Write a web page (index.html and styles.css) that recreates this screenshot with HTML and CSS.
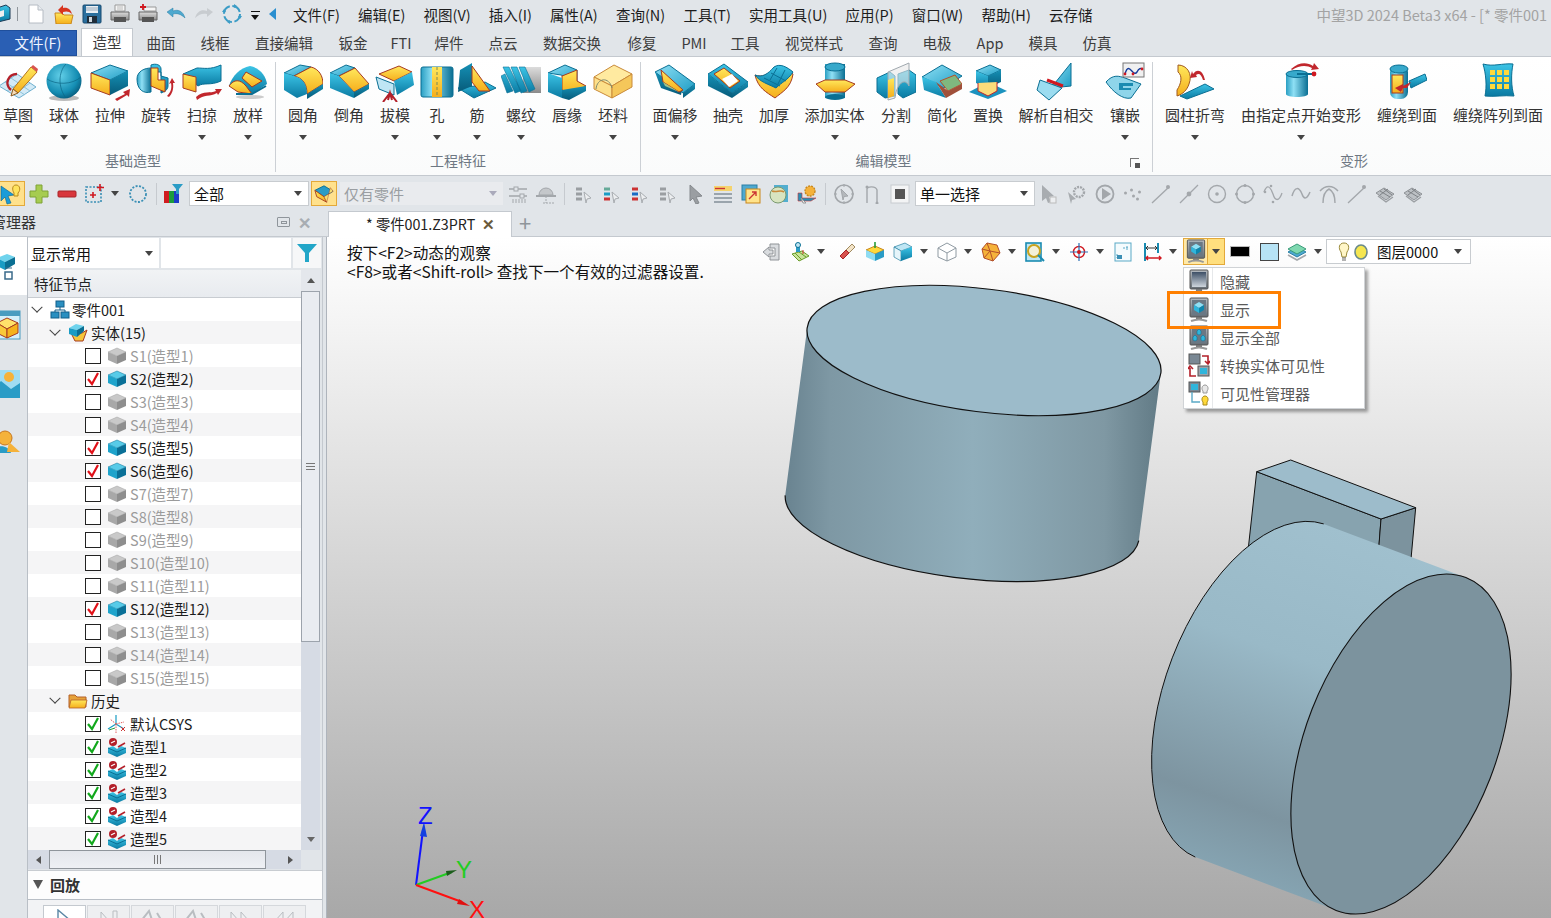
FILE: index.html
```html
<!DOCTYPE html>
<html lang="zh-CN">
<head>
<meta charset="utf-8">
<title>中望3D 2024 Beta3 x64</title>
<link rel="stylesheet" href="styles.css">
</head>
<body>
<svg class="defs" width="0" height="0" aria-hidden="true">
<defs>
<linearGradient id="gb" x1="0" y1="0" x2="0" y2="1"><stop offset="0" stop-color="#3cc4e6"/><stop offset="1" stop-color="#0a7aa2"/></linearGradient>
<linearGradient id="gl" x1="0" y1="0" x2="1" y2="1"><stop offset="0" stop-color="#8fe0f5"/><stop offset="1" stop-color="#1d9cc4"/></linearGradient>
<linearGradient id="gd" x1="0" y1="0" x2="0" y2="1"><stop offset="0" stop-color="#1590b5"/><stop offset="1" stop-color="#075b7a"/></linearGradient>
<linearGradient id="gy" x1="0" y1="0" x2="0" y2="1"><stop offset="0" stop-color="#ffe85c"/><stop offset="1" stop-color="#f5ae1c"/></linearGradient>
<linearGradient id="gs" x1="0" y1="0" x2="0" y2="1"><stop offset="0" stop-color="#dcdcdc"/><stop offset="1" stop-color="#8b8b8b"/></linearGradient>
<radialGradient id="gsph" cx=".4" cy=".35" r=".7"><stop offset="0" stop-color="#62cfe8"/><stop offset=".7" stop-color="#148db3"/><stop offset="1" stop-color="#07597a"/></radialGradient>
<linearGradient id="gcyl" x1="0" y1="0" x2="1" y2="0"><stop offset="0" stop-color="#2a9fc3"/><stop offset=".35" stop-color="#8fe0f5"/><stop offset="1" stop-color="#0a6f93"/></linearGradient>
<linearGradient id="gmon" x1="0" y1="0" x2="0" y2="1"><stop offset="0" stop-color="#b4bac0"/><stop offset="1" stop-color="#656d74"/></linearGradient>
<linearGradient id="gscr" x1="0" y1="0" x2="0" y2="1"><stop offset="0" stop-color="#3d4f66"/><stop offset="1" stop-color="#cfd6dd"/></linearGradient>

<linearGradient id="sideA" gradientUnits="userSpaceOnUse" x1="785" y1="0" x2="1161" y2="0"><stop offset="0" stop-color="#698390"/><stop offset=".12" stop-color="#7e98a4"/><stop offset=".5" stop-color="#90aebb"/><stop offset=".85" stop-color="#7f98a3"/><stop offset="1" stop-color="#617a85"/></linearGradient>
<linearGradient id="sideB" gradientUnits="userSpaceOnUse" x1="1390" y1="545" x2="1270" y2="885"><stop offset="0" stop-color="#a0c0ce"/><stop offset=".38" stop-color="#99b9c7"/><stop offset=".82" stop-color="#7d94a0"/><stop offset="1" stop-color="#85a3b1"/></linearGradient>
<linearGradient id="vpbg" x1="0" y1="0" x2="0" y2="1"><stop offset="0" stop-color="#ffffff"/><stop offset="1" stop-color="#a8a8a8"/></linearGradient>

<!-- ribbon icons -->
<symbol id="r-sketch" viewBox="0 0 40 40"><path d="M1 24 19 12 38 25 21 36Z" fill="#d3eaf6" stroke="#6fb0cf"/><path d="M7 20 27 33M13 16 32 29M9 29 27 17M15 33 32 21" stroke="#8cc3dc" fill="none"/><path d="M19 12C10 12 6 22 13 28" fill="none" stroke="#b3202a" stroke-width="2.4"/><path d="M15 27 33 5 39 10 20 31Z" fill="url(#gy)" stroke="#b5741c"/><path d="M15 27 13 34 20 31Z" fill="#f6dcb8" stroke="#8a5a20"/><path d="M33 5 35 3 40 7 39 10Z" fill="#d9534f"/></symbol>
<symbol id="r-sphere" viewBox="0 0 40 40"><ellipse cx="20" cy="36" rx="15" ry="3" fill="#bbb"/><circle cx="20" cy="19" r="17.5" fill="url(#gsph)"/><path d="M3 17C12 23 28 23 37 15M22 2C14 10 14 26 22 36" fill="none" stroke="#0b6685" stroke-width=".7"/></symbol>
<symbol id="r-extrude" viewBox="0 0 40 40"><path d="M1 11 20 3 38 9 20 18Z" fill="url(#gl)" stroke="#0a6f93"/><path d="M1 11 20 18V33L1 26Z" fill="url(#gy)" stroke="#a63a20"/><path d="M20 18 38 9V24L20 33Z" fill="url(#gd)"/><path d="M25 37 35 32 33 30 40 27 39 35 37 33 27 39Z" fill="#c1272d"/></symbol>
<symbol id="r-revolve" viewBox="0 0 40 40"><path d="M1 17C1 9 9 6 15 6V30C8 32 1 28 1 17Z" fill="url(#gcyl)" stroke="#0a6f93"/><path d="M15 3C20 1 25 3 25 7V14L32 16V24C32 28 28 30 25 31V10H15Z" fill="url(#gb)" stroke="#0a6f93"/><path d="M15 6H22V18H29V30L15 24Z" fill="url(#gy)" stroke="#a63a20"/><path d="M31 34C35 30 36 26 35 21L33 22 36 16 39 21 37 21C38 27 36 32 33 35Z" fill="#c1272d"/></symbol>
<symbol id="r-sweep" viewBox="0 0 40 40"><path d="M1 12 15 6C22 6 28 8 39 3V19C28 24 22 20 16 24Z" fill="url(#gb)" stroke="#0a6f93"/><path d="M1 12 14 15V30L1 26Z" fill="url(#gy)" stroke="#a63a20"/><path d="M14 35C22 28 28 32 34 29L33 27 40 27 36 33 35 31C28 35 22 32 15 38Z" fill="#c1272d"/></symbol>
<symbol id="r-loft" viewBox="0 0 40 40"><path d="M1 24C4 14 12 6 22 4 32 6 38 14 39 22L24 32Z" fill="url(#gb)"/><path d="M1 24C6 17 12 17 18 24L24 32 10 30Z" fill="url(#gy)" stroke="#a63a20"/><path d="M18 10 34 19 24 25 14 16Z" fill="url(#gy)" stroke="#a63a20"/><path d="M8 32 24 32 38 24" fill="none" stroke="#0a6f93" stroke-width="2"/><ellipse cx="22" cy="35" rx="14" ry="2" fill="#ccc"/></symbol>
<symbol id="r-fillet" viewBox="0 0 40 40"><path d="M1 11 17 3 28 5 11 14Z" fill="url(#gl)" stroke="#0a6f93"/><path d="M11 14 28 5C36 7 40 14 40 22L24 32C24 22 20 16 11 14Z" fill="url(#gy)" stroke="#a63a20"/><path d="M1 11 11 14C20 16 24 22 24 32L14 36 1 28Z" fill="url(#gb)"/><path d="M24 32 40 22V27L24 37Z" fill="url(#gd)"/></symbol>
<symbol id="r-chamfer" viewBox="0 0 40 40"><path d="M1 11 17 3 26 6 10 14Z" fill="url(#gl)" stroke="#0a6f93"/><path d="M10 14 26 6 40 22 25 30Z" fill="url(#gy)" stroke="#a63a20"/><path d="M1 11 10 14 25 30V36L1 26Z" fill="url(#gb)"/><path d="M25 30 40 22V27L25 36Z" fill="url(#gd)"/></symbol>
<symbol id="r-draft" viewBox="0 0 40 40"><path d="M4 12 24 4 37 10 19 19Z" fill="url(#gy)" stroke="#a63a20"/><path d="M1 15 19 22V33L4 27Z" fill="#bfe6f4" stroke="#0a6f93"/><path d="M19 19 37 10 39 23 22 33Z" fill="url(#gb)"/><path d="M13 38 15 31 17 38M8 40 15 31 22 40" stroke="#b3202a" stroke-width="2" fill="none"/></symbol>
<symbol id="r-hole" viewBox="0 0 40 40"><rect x="4" y="5" width="32" height="30" rx="2" fill="url(#gcyl)" stroke="#0a6f93"/><rect x="15" y="5" width="10" height="30" fill="url(#gy)"/><path d="M20 5V35" stroke="#7b8a5a" stroke-dasharray="3 2"/></symbol>
<symbol id="r-rib" viewBox="0 0 40 40"><path d="M1 26 17 36 39 26 28 20 18 24Z" fill="url(#gb)" stroke="#0a6f93"/><path d="M3 8 15 1V24L1 30Z" fill="url(#gd)"/><path d="M15 4 33 29 22 29 15 20Z" fill="url(#gy)" stroke="#a63a20"/></symbol>
<symbol id="r-thread" viewBox="0 0 40 40"><rect x="22" y="5" width="18" height="26" fill="url(#gs)"/><path d="M2 5 8 5 20 29 14 31ZM10 5 16 5 26 29 20 31ZM18 5 24 5 34 27 28 30ZM0 14 4 12 12 29 6 31Z" fill="url(#gb)" stroke="#0a6f93" stroke-width=".6"/></symbol>
<symbol id="r-lip" viewBox="0 0 40 40"><path d="M1 11 18 3 30 8V20L14 13Z" fill="url(#gl)" stroke="#0a6f93"/><path d="M15 14 30 8V19L39 24 24 32 15 28Z" fill="url(#gy)" stroke="#a63a20"/><path d="M1 11 15 16V36L1 30Z" fill="url(#gb)"/><path d="M15 28 39 24V29L22 38 15 36Z" fill="url(#gd)"/></symbol>
<symbol id="r-stock" viewBox="0 0 40 40"><path d="M1 15 21 3 39 12 19 24Z" fill="#ffeaa0" stroke="#c98a3a"/><path d="M1 15 19 24V36L1 27Z" fill="#fde08a" stroke="#c98a3a"/><path d="M19 24 39 12V25L19 36Z" fill="#f5c75a" stroke="#c98a3a"/><path d="M3 27C4 16 16 14 19 26" fill="none" stroke="#7f8a70"/></symbol>
<symbol id="r-offset" viewBox="0 0 40 40"><path d="M0 10 14 3 40 22 28 31Z" fill="url(#gl)" stroke="#0a6f93"/><path d="M0 10 6 26 26 33 27 28Z" fill="url(#gd)"/><path d="M6 8 28 28 24 30 8 20Z" fill="url(#gy)" stroke="#a63a20"/><path d="M8 20 24 30 10 24Z" fill="#9cc48a"/><path d="M28 31 40 22V27L28 36Z" fill="url(#gd)"/></symbol>
<symbol id="r-shell" viewBox="0 0 40 40"><path d="M0 12 16 2 40 20 24 31Z" fill="url(#gb)" stroke="#0a6f93"/><path d="M6 12 16 6 32 19 22 26Z" fill="url(#gy)" stroke="#a63a20"/><path d="M14 17 24 12 30 19 21 25Z" fill="#fff"/><path d="M0 12 24 31V36L0 24Z" fill="url(#gd)"/><path d="M24 31 40 20V25L24 36Z" fill="url(#gd)"/></symbol>
<symbol id="r-thicken" viewBox="0 0 40 40"><path d="M1 13C8 16 14 12 20 8 26 3 33 7 39 12 37 26 28 30 21 36 12 30 4 26 1 13Z" fill="url(#gy)" stroke="#a63a20"/><path d="M1 13C8 16 14 12 20 5 26 1 33 5 39 10 34 18 28 20 22 26 14 22 6 20 1 13Z" fill="url(#gb)" stroke="#0a6f93"/><path d="M10 16 26 24M17 11 32 19M23 6 16 18M31 8 24 22" stroke="#0a6f93" fill="none"/></symbol>
<symbol id="r-addsolid" viewBox="0 0 40 40"><rect x="10" y="2" width="20" height="34" fill="url(#gcyl)"/><ellipse cx="20" cy="5" rx="10" ry="4" fill="#37a9cb" stroke="#0a6f93"/><ellipse cx="20" cy="35" rx="10" ry="3" fill="#0a6f93"/><path d="M1 22 10 18H30L40 22 30 30H10Z" fill="url(#gy)" stroke="#a63a20"/></symbol>
<symbol id="r-split" viewBox="0 0 40 40"><path d="M1 16 14 10 19 14V34L9 36 1 30Z" fill="url(#gb)" stroke="#0a6f93"/><path d="M22 12 33 8 40 13V30L27 36 22 32Z" fill="url(#gb)" stroke="#0a6f93"/><path d="M12 10 33 1V24C28 14 20 24 19 36L12 38Z" fill="#e8e8e8" fill-opacity=".6" stroke="#a0a8ae"/><path d="M12 18 18 16V34L12 36Z" fill="url(#gy)"/></symbol>
<symbol id="r-simplify" viewBox="0 0 40 40"><path d="M0 15 20 3 40 14 22 26Z" fill="url(#gl)" stroke="#0a6f93"/><path d="M18 19 33 13 40 22 26 29Z" fill="#7fb87f" stroke="#b3502a"/><path d="M0 15 14 20 24 36 2 28Z" fill="url(#gb)"/><path d="M14 20 26 29 40 22V27L24 36Z" fill="#a0503a"/></symbol>
<symbol id="r-replace" viewBox="0 0 40 40"><path d="M8 9 22 3 33 8 20 14Z" fill="url(#gl)" stroke="#0a6f93"/><path d="M8 9 20 14V26L8 21Z" fill="url(#gb)"/><path d="M20 14 33 8V20L20 26Z" fill="url(#gd)"/><path d="M1 30 20 20 39 29 20 37Z" fill="#1c93bf"/><path d="M10 21V29L20 34 29 29V20" fill="#fbdc7a" stroke="#c1272d"/></symbol>
<symbol id="r-selfint" viewBox="0 0 40 40"><path d="M15 26 35 1V24Z" fill="url(#gl)" stroke="#0a6f93"/><path d="M4 18 26 26 13 38 1 28Z" fill="#9bdcf0" stroke="#0a6f93"/><path d="M11 18 27 24" stroke="#d01820" stroke-width="3"/></symbol>
<symbol id="r-emboss" viewBox="0 0 40 40"><path d="M1 20C8 12 14 14 20 16L36 22 26 36C18 38 8 30 1 20Z" fill="#8fd5ea" stroke="#0a6f93"/><path d="M14 21H28V24H18V26H26V28H14Z" fill="#1a8bb1"/><rect x="18" y="1" width="21" height="14" fill="#f0f0f0" stroke="#777"/><path d="M20 12C24 -2 28 16 32 10 34 6 36 6 37 7" fill="none" stroke="#12389a" stroke-width="1.4"/><circle cx="20" cy="12" r="1.4" fill="#d01820"/><circle cx="28" cy="12" r="1.4" fill="#d01820"/><circle cx="37" cy="7" r="1.4" fill="#d01820"/></symbol>
<symbol id="r-bend" viewBox="0 0 40 40"><path d="M3 3C12 3 18 12 14 22 12 28 8 32 2 34L2 28C6 22 8 14 3 10Z" fill="url(#gy)" stroke="#a05a20"/><path d="M5 34 30 22 39 27 12 37Z" fill="url(#gb)" stroke="#0a6f93"/><path d="M18 12C22 6 28 8 30 18L28 18C26 12 24 11 21 13L22 15 15 16 17 9Z" fill="#c1272d"/></symbol>
<symbol id="r-deform" viewBox="0 0 40 40"><path d="M5 12V32C5 36 27 36 27 32V12Z" fill="url(#gcyl)"/><ellipse cx="16" cy="12" rx="11" ry="3.5" fill="#37a9cb" stroke="#0a6f93"/><path d="M16 12 34 12" stroke="#0a6f93" stroke-width="2"/><circle cx="33" cy="12" r="2.4" fill="#d01820"/><path d="M10 7C18 0 26 0 32 4L33 1 38 7 30 8 31 6C26 3 18 3 11 8Z" fill="#c1272d"/></symbol>
<symbol id="r-wrap" viewBox="0 0 40 40"><rect x="3" y="3" width="18" height="34" rx="7" fill="url(#gcyl)"/><ellipse cx="12" cy="7" rx="9" ry="4" fill="#37a9cb" stroke="#0a6f93"/><rect x="5" y="13" width="11" height="18" fill="url(#gy)" stroke="#a63a20"/><path d="M22 19 38 12 40 18 24 26Z" fill="url(#gb)" stroke="#0a6f93"/><path d="M8 26 16 22V24L24 20 20 26H16L14 30Z" fill="#c1272d"/></symbol>
<symbol id="r-wraparr" viewBox="0 0 40 40"><path d="M5 2C16 5 24 1 35 2 33 12 33 24 36 34 26 33 16 35 7 34 9 24 8 12 5 2Z" fill="url(#gb)" stroke="#0a6f93"/><path d="M12 8h5v5h-5zM19 8h5v5h-5zM26 8h5v5h-5zM12 15h5v5h-5zM19 15h5v5h-5zM26 15h5v5h-5zM12 22h5v5h-5zM19 22h5v5h-5zM26 22h5v5h-5z" fill="#ffd93a"/></symbol>

<!-- quick access -->
<symbol id="q-app" viewBox="0 0 20 20"><path d="M0 5 12 1 16 4V15L4 18Z" fill="url(#gb)" stroke="#1c3a55"/><path d="M4 8 10 6V12L4 14Z" fill="#f0f0f0"/></symbol>
<symbol id="q-new" viewBox="0 0 20 20"><path d="M3 1H12L17 6V19H3Z" fill="#fff" stroke="#b6bcc4"/><path d="M12 1V6H17" fill="#e8ecf0" stroke="#b6bcc4"/></symbol>
<symbol id="q-open" viewBox="0 0 20 20"><path d="M1 9H8L10 11H19L17 20H2Z" fill="url(#gy)" stroke="#c9871c"/><path d="M4 6 9 1V4C14 3 17 6 18 10 15 7 12 7 9 8V11Z" fill="#d8341e"/></symbol>
<symbol id="q-save" viewBox="0 0 20 20"><rect x="1" y="1" width="18" height="18" rx="1" fill="#2a6f9e" stroke="#174a70"/><rect x="4" y="2" width="12" height="7" fill="#e9eff4"/><path d="M4 4h12M4 6h12" stroke="#9ab"/><rect x="5" y="12" width="10" height="7" fill="#1f2d3a"/><rect x="7" y="13" width="3" height="5" fill="#cfd8df"/></symbol>
<symbol id="q-print" viewBox="0 0 20 20"><path d="M5 1H15V7H5Z" fill="#f5f5f5" stroke="#999"/><path d="M1 8H19V16H1Z" fill="url(#gs)" stroke="#666"/><rect x="4" y="13" width="12" height="5" fill="#555"/><path d="M7 3h6M7 5h6" stroke="#bbb"/></symbol>
<symbol id="q-print2" viewBox="0 0 20 20"><path d="M6 3H18V7H6Z" fill="#f5f5f5" stroke="#999"/><path d="M1 8H19V16H1Z" fill="url(#gs)" stroke="#666"/><rect x="4" y="13" width="12" height="5" fill="#555"/><path d="M5 0V6M2 3H8" stroke="#d01820" stroke-width="1.8"/></symbol>
<symbol id="q-undo" viewBox="0 0 20 20"><path d="M1 8 7 4V7C12 5 17 7 19 14 15 10 11 9 7 10V13Z" fill="#4ea9cf" stroke="#2b7fa5" stroke-width=".5"/></symbol>
<symbol id="q-redo" viewBox="0 0 20 20"><path d="M19 8 13 4V7C8 5 3 7 1 14 5 10 9 9 13 10V13Z" fill="#c8ccd0"/></symbol>
<symbol id="q-refresh" viewBox="0 0 20 20"><circle cx="10" cy="10" r="8" fill="none" stroke="#3b9cc6" stroke-width="2" stroke-dasharray="10 2.6"/><path d="M12 0 15 2 12 4ZM20 12 18 15 16 12ZM8 20 5 18 8 16ZM0 8 2 5 4 8Z" fill="#3b9cc6"/></symbol>

<!-- toolbar -->
<symbol id="t-pick" viewBox="0 0 24 24"><path d="M1 4 14 13 8 14 11 21 7 22 5 15 1 19Z" fill="#1a9cd8" stroke="#0a5f8a" stroke-width=".6"/><path d="M16 3C20 3 21 8 18 11V14H14V11C12 8 12 3 16 3Z" fill="#ffe35c" stroke="#b98a1c"/></symbol>
<symbol id="t-plus" viewBox="0 0 20 20"><path d="M7 1H13V7H19V13H13V19H7V13H1V7H7Z" fill="#a6cc50" stroke="#7fa336"/></symbol>
<symbol id="t-minus" viewBox="0 0 20 20"><rect x="1" y="7" width="18" height="6" rx="1" fill="#d8363c" stroke="#a82428"/></symbol>
<symbol id="t-addsel" viewBox="0 0 20 20"><rect x="1" y="3" width="15" height="15" fill="none" stroke="#3a8fb5" stroke-width="1.6" stroke-dasharray="2 1.5"/><path d="M15 0V7M12 3.500H19M8 8V14M5 11H11" stroke="#d01820" stroke-width="1.6"/></symbol>
<symbol id="t-dotc" viewBox="0 0 20 20"><circle cx="10" cy="10" r="8" fill="none" stroke="#3a8fb5" stroke-width="1.8" stroke-dasharray="2 1.5"/></symbol>
<symbol id="t-color" viewBox="0 0 20 20"><rect x="1" y="7" width="5" height="12" fill="#d01c20"/><rect x="6" y="7" width="5" height="12" fill="#1c9c3c"/><rect x="11" y="7" width="5" height="12" fill="#1c3cc8"/><path d="M9 0H20L16 5V10H13V5Z" fill="#2a9cc6"/></symbol>
<symbol id="t-shape" viewBox="0 0 22 22"><path d="M1 7 11 2 21 8 11 14Z" fill="#2a9cc6" stroke="#0a6f93"/><path d="M1 7 11 14 14 20 3 14Z" fill="url(#gy)" stroke="#a63a20"/><path d="M11 14 21 8 18 4 14 20Z" fill="#f5e070" stroke="#a63a20" stroke-width=".5"/></symbol>
<symbol id="t-ruler" viewBox="0 0 20 20"><path d="M1 5H19M1 12H19" stroke="#a3a7ab" stroke-width="1.6"/><rect x="6" y="3" width="4" height="4" fill="#e1e5e9" stroke="#a3a7ab"/><rect x="12" y="10" width="4" height="4" fill="#e1e5e9" stroke="#a3a7ab"/><path d="M4 16H18M4 18H18" stroke="#a3a7ab" stroke-dasharray="2 1"/></symbol>
<symbol id="t-clock" viewBox="0 0 20 20"><path d="M3 11A7 7 0 0 1 17 11Z" fill="#c4c7ca" stroke="#a3a7ab"/><path d="M0 12H20" stroke="#a3a7ab" stroke-width="2"/><path d="M10 12V19M7 19H18" stroke="#a3a7ab" stroke-dasharray="2 1"/></symbol>
<symbol id="t-l1" viewBox="0 0 20 20"><path d="M3 5H9M3 10H9M3 15H9" stroke="#9a9ea2" stroke-width="3"/><path d="M11 8 18 14 14 15 13 19Z" fill="#eceef0" stroke="#a8acb0"/></symbol>
<symbol id="t-l2" viewBox="0 0 20 20"><path d="M3 5H9" stroke="#6a9" stroke-width="3"/><path d="M3 10H9" stroke="#1a9cc4" stroke-width="3"/><path d="M3 15H9" stroke="#c33" stroke-width="3"/><path d="M11 8 18 14 14 15 13 19Z" fill="#eceef0" stroke="#a8acb0"/></symbol>
<symbol id="t-l3" viewBox="0 0 20 20"><path d="M3 5H9" stroke="#c33" stroke-width="3"/><path d="M3 10H9" stroke="#1a6cc4" stroke-width="3"/><path d="M3 15H9" stroke="#c33" stroke-width="3"/><path d="M11 8 18 14 14 15 13 19Z" fill="#eceef0" stroke="#a8acb0"/></symbol>
<symbol id="t-cursor" viewBox="0 0 20 20"><path d="M5 1 17 12 11 13 14 19 11 20 8 14 5 17Z" fill="#9a9ea2" stroke="#85898d"/></symbol>
<symbol id="t-list" viewBox="0 0 20 20"><rect x="1" y="2" width="18" height="5" fill="#f5d36c"/><path d="M2 4.500H12" stroke="#c33" stroke-width="1.400"/><path d="M1 10H19M1 14H19M1 18H19" stroke="#9aa4ac" stroke-width="2"/></symbol>
<symbol id="t-frame" viewBox="0 0 20 20"><rect x="1" y="1" width="15" height="15" fill="#4ea9cf" stroke="#2a7fa5"/><rect x="5" y="5" width="14" height="14" fill="#ffe38a" stroke="#c9871c"/><path d="M8 15 15 8M11 8H15V12" stroke="#c33" stroke-width="1.400" fill="none"/></symbol>
<symbol id="t-globe" viewBox="0 0 20 20"><rect x="5" y="1" width="14" height="17" fill="#52aecf"/><circle cx="9" cy="11" r="8" fill="#d8e4c0" stroke="#7a9a70"/><path d="M3 7C8 9 11 5 15 8" stroke="#c98a3a" stroke-width="1.600" fill="none"/></symbol>
<symbol id="t-gear" viewBox="0 0 20 20"><path d="M1 9V17H14L19 14 13 14H5V9Z" fill="#2a8fb5" stroke="#c33" stroke-width=".6"/><circle cx="13" cy="7" r="5" fill="#f5b23a" stroke="#c9871c" stroke-width="1.400" stroke-dasharray="2 1"/><path d="M4 14 9 19 6 19Z" fill="#eee" stroke="#999"/></symbol>
<symbol id="t-ring" viewBox="0 0 20 20"><circle cx="10" cy="10" r="9" fill="none" stroke="#a3a7ab" stroke-width="1.600"/><path d="M7 5 14 12 10 12.500 9 16Z" fill="#b4b8bc" stroke="#a3a7ab"/><path d="M10 0V3M10 17V20M0 10H3M17 10H20" stroke="#a3a7ab"/></symbol>
<symbol id="t-arch" viewBox="0 0 20 20"><path d="M5 19V5C5 2 14 2 15 6V19" fill="none" stroke="#a3a7ab" stroke-width="1.400"/><circle cx="5" cy="3" r="1.500" fill="#a3a7ab"/><circle cx="15" cy="19" r="1.500" fill="#a3a7ab"/></symbol>
<symbol id="t-stop" viewBox="0 0 20 20"><rect x="1" y="1" width="18" height="18" fill="#f3f4f5" stroke="#c8ccd0"/><rect x="5" y="5" width="10" height="10" fill="#555"/></symbol>
<symbol id="t-curs2" viewBox="0 0 20 20"><path d="M3 1 15 12 10 13 12 18 9 19 7 14 3 17Z" fill="#a8acb0"/><rect x="11" y="13" width="6" height="6" fill="#eceef0" stroke="#bbb"/></symbol>
<symbol id="t-curs3" viewBox="0 0 20 20"><path d="M1 8 9 15 5 16 4 20Z" fill="#a8acb0"/><circle cx="12" cy="8" r="5" fill="none" stroke="#a3a7ab" stroke-width="2.400" stroke-dasharray="2 1"/></symbol>
<symbol id="t-play" viewBox="0 0 20 20"><circle cx="10" cy="10" r="8.500" fill="none" stroke="#a3a7ab" stroke-width="1.800"/><path d="M7 4 16 10 7 16Z" fill="#a3a7ab"/></symbol>
<symbol id="t-dots" viewBox="0 0 20 20"><path d="M1 9a1.500 1.500 0 1 0 3 0a1.500 1.500 0 1 0-3 0M7 6a1.500 1.500 0 1 0 3 0a1.500 1.500 0 1 0-3 0M9 12a1.500 1.500 0 1 0 3 0a1.500 1.500 0 1 0-3 0M15 8a1.500 1.500 0 1 0 3 0a1.500 1.500 0 1 0-3 0M13 15a1.500 1.500 0 1 0 3 0a1.500 1.500 0 1 0-3 0" fill="#a3a7ab"/></symbol>
<symbol id="t-line" viewBox="0 0 20 20"><path d="M1 19 18 3" stroke="#a3a7ab" stroke-width="1.300"/><circle cx="17" cy="3" r="2" fill="#a3a7ab"/></symbol>
<symbol id="t-line2" viewBox="0 0 20 20"><path d="M1 19 19 1" stroke="#a3a7ab" stroke-width="1.300"/><circle cx="10" cy="10" r="2.400" fill="#a3a7ab"/></symbol>
<symbol id="t-circ" viewBox="0 0 20 20"><circle cx="10" cy="10" r="8.500" fill="none" stroke="#a3a7ab" stroke-width="1.400"/><circle cx="10" cy="10" r="1.800" fill="#a3a7ab"/></symbol>
<symbol id="t-circ2" viewBox="0 0 20 20"><circle cx="10" cy="10" r="8.500" fill="none" stroke="#a3a7ab" stroke-width="1.400"/><circle cx="10" cy="1.500" r="1.500" fill="#a3a7ab"/><circle cx="10" cy="18.500" r="1.500" fill="#a3a7ab"/><circle cx="1.500" cy="10" r="1.500" fill="#a3a7ab"/><circle cx="18.500" cy="10" r="1.500" fill="#a3a7ab"/></symbol>
<symbol id="t-wave" viewBox="0 0 20 20"><path d="M1 8C4 0 7 2 10 10 12 17 16 18 19 9" fill="none" stroke="#a3a7ab" stroke-width="1.300"/><circle cx="2" cy="8" r="1.300" fill="#a3a7ab"/><circle cx="10" cy="18" r="1.300" fill="#a3a7ab"/><circle cx="8" cy="2" r="1.300" fill="#a3a7ab"/></symbol>
<symbol id="t-wave2" viewBox="0 0 20 20"><path d="M1 12C4 2 8 3 11 10 13 16 16 15 19 8" fill="none" stroke="#a3a7ab" stroke-width="1.500"/></symbol>
<symbol id="t-archs" viewBox="0 0 20 20"><path d="M1 7C6 1 14 1 19 7M4 19C4 8 8 6 10 5 12 6 16 8 16 19" fill="none" stroke="#a3a7ab" stroke-width="1.400"/></symbol>
<symbol id="t-surf" viewBox="0 0 20 20"><path d="M1 9 9 4 19 10 11 16Z" fill="#bcc0c4" stroke="#8f9397"/><path d="M5 7 15 13M9 5 17 11M5 11 13 5" stroke="#7f8387"/><path d="M3 12 11 18 18 13" fill="none" stroke="#9a9ea2" stroke-width="1.400"/></symbol>

<!-- view bar -->
<symbol id="v-exit" viewBox="0 0 20 20"><path d="M8 2H17V18H8V14H13V6H8Z" fill="#d9dcdf" stroke="#8f9397"/><path d="M1 10 7 5V8H11V12H7V15Z" fill="#d9dcdf" stroke="#8f9397"/></symbol>
<symbol id="v-grid" viewBox="0 0 20 20"><path d="M2 12 12 9 19 14 9 19Z" fill="#c9e49a" stroke="#6a9c2a"/><path d="M5 11 12 18M9 10 16 15" stroke="#6a9c2a"/><rect x="6" y="1" width="4" height="9" fill="#2a9cc6"/><circle cx="8" cy="3" r="2.500" fill="#bfe6f4" stroke="#0a6f93"/><path d="M13 8V12" stroke="#c33"/></symbol>
<symbol id="v-brush" viewBox="0 0 20 20"><path d="M9 8 15 2 18 5 12 11Z" fill="#f3e4c8" stroke="#a08a60"/><path d="M3 14 9 8 12 11 6 17Z" fill="#d8534f" stroke="#a82428"/></symbol>
<symbol id="v-cubey" viewBox="0 0 20 20"><path d="M1 8 10 4 19 8 10 12Z" fill="#ffd93a" stroke="#c9871c"/><path d="M1 8 10 12V19L1 15Z" fill="#8fdcf2"/><path d="M10 12 19 8V15L10 19Z" fill="#2a9cc6"/><path d="M10 0V6" stroke="#2a9c3a" stroke-width="1.600"/></symbol>
<symbol id="v-cubeb" viewBox="0 0 20 20"><path d="M1 5 12 1 19 5 8 9Z" fill="#bfe6f4" stroke="#0a6f93" stroke-width=".6"/><path d="M1 5 8 9V19L1 15Z" fill="#e6f5fa" stroke="#0a6f93" stroke-width=".6"/><path d="M8 9 19 5V15L8 19Z" fill="url(#gb)"/></symbol>
<symbol id="v-cubew" viewBox="0 0 20 20"><path d="M1 6 10 1 19 6V15L10 19 1 15Z" fill="#fff" stroke="#8f9aa2"/><path d="M1 6 10 11 19 6M10 11V19" fill="none" stroke="#8f9aa2"/></symbol>
<symbol id="v-poly" viewBox="0 0 20 20"><path d="M6 1 16 3 19 11 12 19 3 16 1 7Z" fill="#f5b23a" stroke="#b3502a"/><path d="M6 1 9 9 19 11M9 9 3 16M9 9 12 19M9 9 1 7" stroke="#b3502a" fill="none"/></symbol>
<symbol id="v-zoom" viewBox="0 0 20 20"><rect x="1" y="1" width="15" height="18" fill="#bfe6f4" stroke="#1a8bb1" stroke-width="1.600"/><circle cx="9" cy="9" r="6" fill="#f4f0d8" stroke="#c9a21c" stroke-width="2"/><path d="M13 13 19 19" stroke="#1a8bb1" stroke-width="2"/></symbol>
<symbol id="v-target" viewBox="0 0 20 20"><circle cx="10" cy="10" r="5.500" fill="none" stroke="#d01820" stroke-width="1.400"/><path d="M10 1V19M1 10H19" stroke="#2a6fb5" stroke-width="1.200"/><circle cx="10" cy="10" r="2" fill="#d01820"/></symbol>
<symbol id="v-page" viewBox="0 0 20 20"><rect x="2" y="1" width="16" height="18" fill="#f5fbfd" stroke="#5aa9c6"/><path d="M14 4V8M10 6H15M4 12V16H9" stroke="#5aa9c6" stroke-dasharray="2 1" fill="none"/><rect x="4" y="13" width="5" height="4" fill="#3a8fb5"/></symbol>
<symbol id="v-dim" viewBox="0 0 20 20"><path d="M3 1V19M16 1V11" stroke="#1a8bb1" stroke-width="2"/><path d="M4 6H15M6 4 4 6 6 8M13 4 15 6 13 8" stroke="#333" fill="none"/><path d="M4 16H19M6 14 4 16 6 18M17 14 19 16 17 18" stroke="#d01820" stroke-width="1.400" fill="none"/></symbol>
<symbol id="v-stack" viewBox="0 0 20 20"><path d="M1 10 10 5 19 10 10 15Z" fill="#4ea9cf" stroke="#2a7fa5"/><path d="M1 7 10 2 19 7 10 12Z" fill="#7fd8b0" stroke="#3a9c7a"/><path d="M1 13 10 18 19 13" fill="none" stroke="#a3a7ab" stroke-width="1.600"/></symbol>
<symbol id="v-bulb" viewBox="0 0 14 20"><path d="M7 1C12 1 13 6 10 10L9 15H5L4 10C1 6 2 1 7 1Z" fill="#fff6c8" stroke="#9a8a3a"/><path d="M5 16H9M5 18H9" stroke="#666"/></symbol>
<symbol id="v-oval" viewBox="0 0 14 20"><ellipse cx="7" cy="10" rx="6" ry="7" fill="#f5e650" stroke="#6a8a8a" stroke-width="1.600"/></symbol>

<!-- monitors -->
<symbol id="m-base" viewBox="0 0 22 26"><rect x="2" y="1" width="18" height="19" rx="1" fill="url(#gmon)" stroke="#555"/><rect x="8" y="20" width="6" height="2" fill="#777"/><path d="M3 24C8 22 14 22 19 24" stroke="#999" stroke-width="2" fill="none"/></symbol>
<symbol id="m-hide" viewBox="0 0 22 26"><use href="#m-base"/><rect x="4" y="3" width="14" height="15" fill="url(#gscr)"/></symbol>
<symbol id="m-show" viewBox="0 0 22 26"><use href="#m-base"/><rect x="4" y="3" width="14" height="15" fill="#6a7884"/><path d="M6 8 11 5 16 8 11 11Z" fill="#8fe0f5"/><path d="M6 8 11 11V16L6 13Z" fill="#2fb5dc"/><path d="M11 11 16 8V13L11 16Z" fill="#0e86ad"/></symbol>
<symbol id="m-all" viewBox="0 0 22 26"><use href="#m-base"/><rect x="4" y="3" width="14" height="15" fill="#6a7884"/><path d="M9 6 11 4 13 6V9L11 10 9 9ZM5 12 7 10 9 12V15L7 16 5 15ZM13 12 15 10 17 12V15L15 16 13 15Z" fill="#2fb5dc" stroke="#0a6f93" stroke-width=".5"/></symbol>
<symbol id="m-toggle" viewBox="0 0 22 26"><rect x="1" y="1" width="11" height="10" fill="#7a8894" stroke="#555"/><rect x="10" y="13" width="11" height="10" fill="#9aa2aa" stroke="#555"/><rect x="12" y="15" width="7" height="6" fill="#2fb5dc"/><path d="M14 3H20V10M17 8 20 11 22 8M8 23H2V15M0 16 2 13 5 16" stroke="#b3202a" stroke-width="1.600" fill="none"/></symbol>
<symbol id="m-mgr" viewBox="0 0 22 26"><rect x="1" y="1" width="11" height="10" fill="#7a8894" stroke="#555"/><rect x="3" y="3" width="7" height="6" fill="#2fb5dc"/><path d="M4 11V21H12" stroke="#5aa9c6" fill="none" stroke-width="1.400"/><path d="M17 4C20 4 21 8 19 10V12H15V10C13 8 14 4 17 4Z" fill="#e8e8e8" stroke="#999"/><path d="M17 15C20 15 21 19 19 21V24H15V21C13 19 14 15 17 15Z" fill="#ffd93a" stroke="#a88a1c"/></symbol>

<!-- tree -->
<symbol id="n-cubeg" viewBox="0 0 20 20"><path d="M1 6 10 2 19 6 10 10Z" fill="#c9c9c9" stroke="#a0a0a0" stroke-width=".5"/><path d="M1 6 10 10V18L1 14Z" fill="#a8a8a8"/><path d="M10 10 19 6V14L10 18Z" fill="#8e8e8e"/></symbol>
<symbol id="n-cubeb" viewBox="0 0 20 20"><path d="M1 6 10 2 19 6 10 10Z" fill="#58cbe8" stroke="#0a6f93" stroke-width=".5"/><path d="M1 6 10 10V18L1 14Z" fill="#1ea3cb"/><path d="M10 10 19 6V14L10 18Z" fill="#0a7097"/></symbol>
<symbol id="n-org" viewBox="0 0 20 20"><rect x="6" y="1" width="8" height="6" fill="#2a8fc0" stroke="#125f8a"/><rect x="1" y="12" width="8" height="6" fill="#2a8fc0" stroke="#125f8a"/><rect x="11" y="12" width="8" height="6" fill="#2a8fc0" stroke="#125f8a"/><path d="M10 7V10M5 12V10H15V12" stroke="#125f8a" fill="none"/></symbol>
<symbol id="n-solid" viewBox="0 0 20 20"><path d="M3 10H14L19 7 15 18H7Z" fill="#f5c53a" stroke="#a63a20"/><path d="M1 5 8 1 16 3 9 7Z" fill="#6fd3ed"/><path d="M1 5 9 7V14L1 11Z" fill="#1a9cc4"/><path d="M9 7 16 3V8L9 14Z" fill="#0a6f93"/></symbol>
<symbol id="n-folder" viewBox="0 0 20 20"><path d="M1 4H7L9 6H18V16H1Z" fill="#e6a23a" stroke="#b3602a"/><path d="M3 9H19L17 17H1Z" fill="url(#gy)" stroke="#b3602a" stroke-width=".8"/></symbol>
<symbol id="n-csys" viewBox="0 0 20 20"><path d="M9 10V1M9 10 1 15M9 10 17 15" stroke="#1a9cc4" stroke-width="1.200"/><path d="M9 10 3 5M9 10 9 19M9 10 17 8" stroke="#e06060" stroke-dasharray="1.500 1"/><path d="M2 16 8 14" stroke="#2a9c3a"/><path d="M14 13 18 17M18 13 14 17" stroke="#c33"/></symbol>
<symbol id="n-feat" viewBox="0 0 20 20"><path d="M1 11 6 9 10 12 14 9 19 11V16L10 20 1 16Z" fill="url(#gb)"/><path d="M1 11 10 15 19 11" fill="none" stroke="#0a6f93"/><circle cx="6" cy="5" r="4" fill="#b3202a"/><path d="M4 6 8 4" stroke="#fff" stroke-width="1.200"/><path d="M11 10 18 6" stroke="#b3202a" stroke-width="1.600"/></symbol>
<symbol id="n-chkr" viewBox="0 0 14 14"><path d="M2 7 6 12 12 1" fill="none" stroke="#e01018" stroke-width="2.200"/></symbol>
<symbol id="n-chkg" viewBox="0 0 14 14"><path d="M2 7 6 12 12 1" fill="none" stroke="#12a81c" stroke-width="2.200"/></symbol>
<symbol id="n-funnel" viewBox="0 0 20 20"><path d="M0 1H20L12 10V19H8V10Z" fill="#22a6c8"/></symbol>
<symbol id="n-side" viewBox="0 0 30 30"><rect x="1" y="1" width="28" height="28" fill="#d5effa" stroke="#4a9cc0"/><rect x="1" y="1" width="28" height="5" fill="#4a9cc0"/><path d="M6 13 16 8 27 13 16 19Z" fill="#ffe16a" stroke="#a63a20"/><path d="M6 13 16 19V28L6 23Z" fill="#f8c93a" stroke="#a63a20"/><path d="M16 19 27 13V23L16 28Z" fill="#f5b21c" stroke="#a63a20"/></symbol>
<symbol id="n-land" viewBox="0 0 30 30"><rect x="1" y="1" width="28" height="28" fill="#9fdcf2"/><circle cx="18" cy="8" r="5" fill="#f5b23a"/><path d="M1 20 10 12 20 20 29 14V29H1Z" fill="#2a9cc6"/><path d="M1 16 9 21 1 26Z" fill="#f07c1c"/></symbol>
<symbol id="n-user" viewBox="0 0 30 30"><circle cx="14" cy="10" r="7" fill="#f5b23a" stroke="#c9771c"/><path d="M0 25C2 16 18 16 20 25Z" fill="#2a9cc6"/><path d="M18 14 29 24H16Z" fill="#f5b23a"/></symbol>
<symbol id="n-layout" viewBox="0 0 30 30"><path d="M4 7 14 3 22 6 12 11Z" fill="#6fd3ed"/><path d="M4 7 12 11V19L4 15Z" fill="#1a9cc4"/><path d="M12 11 22 6V13L12 19Z" fill="#0a6f93"/><path d="M0 25H7M4 21V29" stroke="#3a6a8a" stroke-width="1.500"/><rect x="12" y="21" width="7" height="7" fill="#fff" stroke="#3a6a8a" stroke-width="1.500"/><path d="M12 17H19" stroke="#3a6a8a"/></symbol>
<symbol id="b-play" viewBox="0 0 30 20"><path d="M9 1V20L22 12Z" fill="none" stroke="#5b87a5" stroke-width="1.400"/></symbol>
<symbol id="b-a" viewBox="0 0 30 20"><path d="M8 3V20L16 12ZM20 2H24V14H20Z" fill="none" stroke="#b9bdc1"/></symbol>
<symbol id="b-b" viewBox="0 0 30 20"><path d="M4 12 12 2 16 14M20 4 26 14" fill="none" stroke="#b9bdc1" stroke-width="2"/></symbol>
<symbol id="b-c" viewBox="0 0 30 20"><path d="M6 3V20L14 12ZM16 3V20L24 12Z" fill="none" stroke="#b9bdc1"/></symbol>
<symbol id="b-d" viewBox="0 0 30 20"><path d="M14 3V20L6 12ZM24 3V20L16 12Z" fill="none" stroke="#b9bdc1"/></symbol>
</defs>
</svg>

<div class="app">
  <header class="titlebar">
    <div class="qat">
      <svg class="qi qi-app"><use href="#q-app"/></svg><span class="qsep"></span>
      <svg class="qi qi-first"><use href="#q-new"/></svg>
      <svg class="qi"><use href="#q-open"/></svg>
      <svg class="qi"><use href="#q-save"/></svg>
      <svg class="qi"><use href="#q-print"/></svg>
      <svg class="qi"><use href="#q-print2"/></svg>
      <svg class="qi"><use href="#q-undo"/></svg>
      <svg class="qi"><use href="#q-redo"/></svg>
      <svg class="qi"><use href="#q-refresh"/></svg>
      <span class="qdd"></span>
      <span class="qleft"></span>
    </div>
    <nav class="menu">
      <span>文件(F)</span><span>编辑(E)</span><span>视图(V)</span><span>插入(I)</span><span>属性(A)</span><span>查询(N)</span><span>工具(T)</span><span>实用工具(U)</span><span>应用(P)</span><span>窗口(W)</span><span>帮助(H)</span><span>云存储</span>
    </nav>
    <div class="apptitle">中望3D 2024 Beta3 x64 - [* 零件001</div>
  </header>

  <div class="tabs">
    <div class="filebtn">文件(F)</div>
    <div class="tab on">造型</div><div class="tab">曲面</div><div class="tab">线框</div><div class="tab">直接编辑</div><div class="tab">钣金</div><div class="tab tab-s">FTI</div><div class="tab">焊件</div><div class="tab">点云</div><div class="tab">数据交换</div><div class="tab">修复</div><div class="tab tab-s">PMI</div><div class="tab">工具</div><div class="tab">视觉样式</div><div class="tab">查询</div><div class="tab">电极</div><div class="tab tab-s">App</div><div class="tab">模具</div><div class="tab">仿真</div>
  </div>

  <div class="ribbon">
    <section class="group g1">
      <div class="tools">
        <div class="tool"><svg class="ri"><use href="#r-sketch"/></svg><span>草图</span><i class="ar"></i></div>
        <div class="tool"><svg class="ri"><use href="#r-sphere"/></svg><span>球体</span><i class="ar"></i></div>
        <div class="tool"><svg class="ri"><use href="#r-extrude"/></svg><span>拉伸</span></div>
        <div class="tool"><svg class="ri"><use href="#r-revolve"/></svg><span>旋转</span></div>
        <div class="tool"><svg class="ri"><use href="#r-sweep"/></svg><span>扫掠</span><i class="ar"></i></div>
        <div class="tool"><svg class="ri"><use href="#r-loft"/></svg><span>放样</span><i class="ar"></i></div>
      </div>
      <div class="glabel">基础造型</div>
    </section>
    <section class="group g2">
      <div class="tools">
        <div class="tool"><svg class="ri"><use href="#r-fillet"/></svg><span>圆角</span><i class="ar"></i></div>
        <div class="tool"><svg class="ri"><use href="#r-chamfer"/></svg><span>倒角</span></div>
        <div class="tool"><svg class="ri"><use href="#r-draft"/></svg><span>拔模</span><i class="ar"></i></div>
        <div class="tool w38"><svg class="ri"><use href="#r-hole"/></svg><span>孔</span><i class="ar"></i></div>
        <div class="tool w42"><svg class="ri"><use href="#r-rib"/></svg><span>筋</span><i class="ar"></i></div>
        <div class="tool"><svg class="ri"><use href="#r-thread"/></svg><span>螺纹</span><i class="ar"></i></div>
        <div class="tool"><svg class="ri"><use href="#r-lip"/></svg><span>唇缘</span></div>
        <div class="tool"><svg class="ri"><use href="#r-stock"/></svg><span>坯料</span><i class="ar"></i></div>
      </div>
      <div class="glabel">工程特征</div>
    </section>
    <section class="group g3">
      <div class="tools">
        <div class="tool"><svg class="ri"><use href="#r-offset"/></svg><span>面偏移</span><i class="ar"></i></div>
        <div class="tool"><svg class="ri"><use href="#r-shell"/></svg><span>抽壳</span></div>
        <div class="tool"><svg class="ri"><use href="#r-thicken"/></svg><span>加厚</span></div>
        <div class="tool"><svg class="ri"><use href="#r-addsolid"/></svg><span>添加实体</span><i class="ar"></i></div>
        <div class="tool"><svg class="ri"><use href="#r-split"/></svg><span>分割</span><i class="ar"></i></div>
        <div class="tool"><svg class="ri"><use href="#r-simplify"/></svg><span>简化</span></div>
        <div class="tool"><svg class="ri"><use href="#r-replace"/></svg><span>置换</span></div>
        <div class="tool"><svg class="ri"><use href="#r-selfint"/></svg><span>解析自相交</span></div>
        <div class="tool"><svg class="ri"><use href="#r-emboss"/></svg><span>镶嵌</span><i class="ar"></i></div>
      </div>
      <div class="glabel glabel-pad">编辑模型</div>
      <span class="launcher"></span>
    </section>
    <section class="group g4">
      <div class="tools">
        <div class="tool"><svg class="ri"><use href="#r-bend"/></svg><span>圆柱折弯</span><i class="ar"></i></div>
        <div class="tool"><svg class="ri"><use href="#r-deform"/></svg><span>由指定点开始变形</span><i class="ar"></i></div>
        <div class="tool"><svg class="ri"><use href="#r-wrap"/></svg><span>缠绕到面</span></div>
        <div class="tool"><svg class="ri"><use href="#r-wraparr"/></svg><span>缠绕阵列到面</span></div>
      </div>
      <div class="glabel">变形</div>
    </section>
  </div>

  <div class="toolbar">
    <div class="yb yb-first"><svg class="ti"><use href="#t-pick"/></svg></div>
    <div class="b28"><svg class="ti"><use href="#t-plus"/></svg></div>
    <div class="b28"><svg class="ti"><use href="#t-minus"/></svg></div>
    <div class="b27"><svg class="ti"><use href="#t-addsel"/></svg></div>
    <div class="dd"><i class="ar"></i></div>
    <div class="b28 ml2"><svg class="ti"><use href="#t-dotc"/></svg></div>
    <span class="sep"></span>
    <div class="b24 mr4"><svg class="ti"><use href="#t-color"/></svg></div>
    <div class="sel w120"><span>全部</span><i class="ar"></i></div>
    <div class="yb yb-shape"><svg class="ti"><use href="#t-shape"/></svg></div>
    <div class="sel dis w165"><span>仅有零件</span><i class="ar"></i></div>
    <div class="b28"><svg class="ti"><use href="#t-ruler"/></svg></div>
    <div class="b28"><svg class="ti"><use href="#t-clock"/></svg></div>
    <span class="sep"></span>
    <div class="b28"><svg class="ti"><use href="#t-l1"/></svg></div>
    <div class="b28"><svg class="ti"><use href="#t-l2"/></svg></div>
    <div class="b28"><svg class="ti"><use href="#t-l3"/></svg></div>
    <div class="b28"><svg class="ti"><use href="#t-l1"/></svg></div>
    <div class="b28"><svg class="ti"><use href="#t-cursor"/></svg></div>
    <div class="b28"><svg class="ti"><use href="#t-list"/></svg></div>
    <div class="b28"><svg class="ti"><use href="#t-frame"/></svg></div>
    <div class="b28"><svg class="ti"><use href="#t-globe"/></svg></div>
    <div class="b28"><svg class="ti"><use href="#t-gear"/></svg></div>
    <span class="sep"></span>
    <div class="b28"><svg class="ti"><use href="#t-ring"/></svg></div>
    <div class="b28"><svg class="ti"><use href="#t-arch"/></svg></div>
    <div class="b28"><svg class="ti"><use href="#t-stop"/></svg></div>
    <div class="sel w120 ml1"><span>单一选择</span><i class="ar"></i></div>
    <div class="b28"><svg class="ti"><use href="#t-curs2"/></svg></div>
    <div class="b28"><svg class="ti"><use href="#t-curs3"/></svg></div>
    <div class="b28"><svg class="ti"><use href="#t-play"/></svg></div>
    <div class="b28"><svg class="ti"><use href="#t-dots"/></svg></div>
    <div class="b28"><svg class="ti"><use href="#t-line"/></svg></div>
    <div class="b28"><svg class="ti"><use href="#t-line2"/></svg></div>
    <div class="b28"><svg class="ti"><use href="#t-circ"/></svg></div>
    <div class="b28"><svg class="ti"><use href="#t-circ2"/></svg></div>
    <div class="b28"><svg class="ti"><use href="#t-wave"/></svg></div>
    <div class="b28"><svg class="ti"><use href="#t-wave2"/></svg></div>
    <div class="b28"><svg class="ti"><use href="#t-archs"/></svg></div>
    <div class="b28"><svg class="ti"><use href="#t-line"/></svg></div>
    <div class="b28"><svg class="ti"><use href="#t-surf"/></svg></div>
    <div class="b28"><svg class="ti"><use href="#t-surf"/></svg></div>
  </div>

  <div class="docbar">
    <div class="mgr">
      <span class="mgr-title">管理器</span>
      <span class="mgr-btn"><i class="mgr-restore"></i></span>
      <span class="mgr-x">✕</span>
    </div>
    <div class="doctab"><span>* 零件001.Z3PRT</span><b class="doc-x">✕</b></div>
    <div class="docadd">+</div>
  </div>

  <main class="main">
    <aside class="strip">
      <div class="strip-on"><svg class="si"><use href="#n-layout"/></svg></div>
      <div class="strip-i"><svg class="si"><use href="#n-side"/></svg></div>
      <div class="strip-i"><svg class="si"><use href="#n-land"/></svg></div>
      <div class="strip-i"><svg class="si"><use href="#n-user"/></svg></div>
    </aside>

    <section class="panel">
      <div class="pfilter">
        <div class="psel"><span>显示常用</span><i class="ar"></i></div>
        <div class="pinput"></div>
        <div class="pfun"><svg class="pfun-i"><use href="#n-funnel"/></svg></div>
      </div>
      <div class="treewrap">
        <div class="tree">
          <div class="thead">特征节点</div>
          <div class="row l0"><i class="chev"></i><svg class="ni"><use href="#n-org"/></svg><span>零件001</span></div>
          <div class="row alt l1"><i class="chev"></i><svg class="ni"><use href="#n-solid"/></svg><span>实体(15)</span></div>
          <div class="row l2 off"><b class="cb"></b><svg class="ni"><use href="#n-cubeg"/></svg><span>S1(造型1)</span></div>
          <div class="row alt l2"><b class="cb"><svg><use href="#n-chkr"/></svg></b><svg class="ni"><use href="#n-cubeb"/></svg><span>S2(造型2)</span></div>
          <div class="row l2 off"><b class="cb"></b><svg class="ni"><use href="#n-cubeg"/></svg><span>S3(造型3)</span></div>
          <div class="row alt l2 off"><b class="cb"></b><svg class="ni"><use href="#n-cubeg"/></svg><span>S4(造型4)</span></div>
          <div class="row l2"><b class="cb"><svg><use href="#n-chkr"/></svg></b><svg class="ni"><use href="#n-cubeb"/></svg><span>S5(造型5)</span></div>
          <div class="row alt l2"><b class="cb"><svg><use href="#n-chkr"/></svg></b><svg class="ni"><use href="#n-cubeb"/></svg><span>S6(造型6)</span></div>
          <div class="row l2 off"><b class="cb"></b><svg class="ni"><use href="#n-cubeg"/></svg><span>S7(造型7)</span></div>
          <div class="row alt l2 off"><b class="cb"></b><svg class="ni"><use href="#n-cubeg"/></svg><span>S8(造型8)</span></div>
          <div class="row l2 off"><b class="cb"></b><svg class="ni"><use href="#n-cubeg"/></svg><span>S9(造型9)</span></div>
          <div class="row alt l2 off"><b class="cb"></b><svg class="ni"><use href="#n-cubeg"/></svg><span>S10(造型10)</span></div>
          <div class="row l2 off"><b class="cb"></b><svg class="ni"><use href="#n-cubeg"/></svg><span>S11(造型11)</span></div>
          <div class="row alt l2"><b class="cb"><svg><use href="#n-chkr"/></svg></b><svg class="ni"><use href="#n-cubeb"/></svg><span>S12(造型12)</span></div>
          <div class="row l2 off"><b class="cb"></b><svg class="ni"><use href="#n-cubeg"/></svg><span>S13(造型13)</span></div>
          <div class="row alt l2 off"><b class="cb"></b><svg class="ni"><use href="#n-cubeg"/></svg><span>S14(造型14)</span></div>
          <div class="row l2 off"><b class="cb"></b><svg class="ni"><use href="#n-cubeg"/></svg><span>S15(造型15)</span></div>
          <div class="row alt l1"><i class="chev"></i><svg class="ni"><use href="#n-folder"/></svg><span>历史</span></div>
          <div class="row l2"><b class="cb"><svg><use href="#n-chkg"/></svg></b><svg class="ni"><use href="#n-csys"/></svg><span>默认CSYS</span></div>
          <div class="row alt l2"><b class="cb"><svg><use href="#n-chkg"/></svg></b><svg class="ni"><use href="#n-feat"/></svg><span>造型1</span></div>
          <div class="row l2"><b class="cb"><svg><use href="#n-chkg"/></svg></b><svg class="ni"><use href="#n-feat"/></svg><span>造型2</span></div>
          <div class="row alt l2"><b class="cb"><svg><use href="#n-chkg"/></svg></b><svg class="ni"><use href="#n-feat"/></svg><span>造型3</span></div>
          <div class="row l2"><b class="cb"><svg><use href="#n-chkg"/></svg></b><svg class="ni"><use href="#n-feat"/></svg><span>造型4</span></div>
          <div class="row alt l2"><b class="cb"><svg><use href="#n-chkg"/></svg></b><svg class="ni"><use href="#n-feat"/></svg><span>造型5</span></div>
        </div>
        <div class="vscroll">
          <div class="vs-btn"><i class="tri-up"></i></div>
          <div class="vs-thumb"><i class="grip-h"></i></div>
          <div class="vs-track"></div>
          <div class="vs-btn vs-down"><i class="ar ar-big"></i></div>
        </div>
      </div>
      <div class="hscroll">
        <div class="hs-btn"><i class="tri-left"></i></div>
        <div class="hs-thumb"><i class="grip-v"></i></div>
        <div class="hs-track"></div>
        <div class="hs-btn"><i class="tri-right"></i></div>
      </div>
      <div class="playback"><i class="pb-tri"></i><strong>回放</strong></div>
      <div class="pbbar">
        <div class="pbb first"><svg><use href="#b-play"/></svg></div>
        <div class="pbb"><svg><use href="#b-a"/></svg></div>
        <div class="pbb"><svg><use href="#b-b"/></svg></div>
        <div class="pbb"><svg><use href="#b-b"/></svg></div>
        <div class="pbb"><svg><use href="#b-c"/></svg></div>
        <div class="pbb"><svg><use href="#b-d"/></svg></div>
      </div>
    </section>

    <div class="splitter"></div>

    <section class="viewport">
      <svg class="scene" viewBox="327 237 1224 681">
        <rect x="327" y="237" width="1224" height="681" fill="url(#vpbg)"/>
        <!-- upper cylinder -->
        <path d="M807.200 327.900 785.200 495.400A178.300 61.500 7.260 0 0 1138.800 540.600L1160.800 373.100Z" fill="url(#sideA)"/>
        <path d="M785.200 495.400A178.300 61.500 7.260 0 0 1138.800 540.600" fill="none" stroke="#111" stroke-width="1.200"/>
        <ellipse cx="984" cy="350.500" rx="178.300" ry="61.500" transform="rotate(7.260 984 350.500)" fill="#9cbbca" stroke="#111" stroke-width="1.200"/>
        <!-- block behind lower cylinder -->
        <path d="M1256.700 471.700 1381 519 1378 560 1247 560Z" fill="#87a3af" stroke="#111"/>
        <path d="M1381 519 1415.700 507.700 1410 570 1377 570Z" fill="#7c939e" stroke="#111"/>
        <path d="M1256.700 471.700 1290.700 460 1415.700 507.700 1381 519Z" fill="#9dbccb" stroke="#111"/>
        <!-- lower cylinder -->
        <path d="M1323.700 523.900 1465.700 577.400 1337.300 910.600 1195.300 857.100A178.600 95.500 -68.700 0 1 1323.700 523.900Z" fill="url(#sideB)"/>
        <path d="M1195.300 857.100A178.600 95.500 -68.700 0 1 1323.700 523.900" fill="none" stroke="#111"/>
        <ellipse cx="1401" cy="744" rx="178.600" ry="95.500" transform="rotate(-68.700 1401 744)" fill="#7c939e" stroke="#111" stroke-width="1.100"/>
        <!-- triad -->
        <path d="M416 885 423 830" stroke="#1212ff" stroke-width="2"/>
        <path d="M424 822 427 837 420 836Z" fill="#1240e0"/>
        <path d="M416 885 452 872" stroke="#22cc22" stroke-width="2"/>
        <path d="M457 870 447 876 446 871Z" fill="#1c5c1c"/>
        <path d="M416 885 462 902" stroke="#ff1010" stroke-width="2"/>
        <path d="M470 906 457 904 459 899Z" fill="#e01010"/>
        <text x="418" y="824" class="ax ax-z">Z</text>
        <text x="456" y="878" class="ax ax-y">Y</text>
        <text x="469" y="918" class="ax ax-x">X</text>
      </svg>

      <div class="prompt">
        <p>按下&lt;F2&gt;动态的观察</p>
        <p>&lt;F8&gt;或者&lt;Shift-roll&gt; 查找下一个有效的过滤器设置.</p>
      </div>

      <div class="viewbar">
        <svg class="vi"><use href="#v-exit"/></svg>
        <div class="vg"><svg class="vi"><use href="#v-grid"/></svg><i class="ar"></i></div>
        <svg class="vi vm3"><use href="#v-brush"/></svg>
        <svg class="vi"><use href="#v-cubey"/></svg>
        <div class="vg"><svg class="vi"><use href="#v-cubeb"/></svg><i class="ar"></i></div>
        <div class="vg"><svg class="vi"><use href="#v-cubew"/></svg><i class="ar"></i></div>
        <div class="vg"><svg class="vi"><use href="#v-poly"/></svg><i class="ar"></i></div>
        <div class="vg"><svg class="vi"><use href="#v-zoom"/></svg><i class="ar"></i></div>
        <div class="vg"><svg class="vi"><use href="#v-target"/></svg><i class="ar"></i></div>
        <svg class="vi"><use href="#v-page"/></svg>
        <div class="vg vm1"><svg class="vi"><use href="#v-dim"/></svg><i class="ar"></i></div>
        <div class="vhl"><span class="vhl-a"><svg class="vm"><use href="#m-show"/></svg></span><span class="vhl-b"><i class="ar"></i></span></div>
        <span class="swatch black"></span>
        <span class="swatch blue"></span>
        <div class="vg"><svg class="vi"><use href="#v-stack"/></svg><i class="ar"></i></div>
        <div class="layer"><svg class="lb"><use href="#v-bulb"/></svg><svg class="lb"><use href="#v-oval"/></svg><span>图层0000</span><i class="ar"></i></div>
      </div>

      <div class="popup">
        <div class="pi"><svg><use href="#m-hide"/></svg><span>隐藏</span></div>
        <div class="pi"><svg><use href="#m-show"/></svg><span>显示</span></div>
        <div class="pi"><svg><use href="#m-all"/></svg><span>显示全部</span></div>
        <div class="pi"><svg><use href="#m-toggle"/></svg><span>转换实体可见性</span></div>
        <div class="pi"><svg><use href="#m-mgr"/></svg><span>可见性管理器</span></div>
      </div>
      <div class="callout"></div>
    </section>
  </main>
</div>
</body>
</html>
```

FILE: styles.css
```css
* { box-sizing: border-box; }
html, body { margin: 0; padding: 0; height: 100%; overflow: hidden; }
body {
  font-family: "Noto Sans CJK SC", "Noto Sans", sans-serif;
  font-size: 15px;
  color: #222;
  background: #e1e5e9;
}
.defs { position: absolute; }
.app { width: 1551px; height: 918px; overflow: hidden; display: flex; flex-direction: column; }
svg { display: block; }
i { display: block; }

/* shared small dropdown triangle */
.ar { width: 0; height: 0; border-left: 4px solid transparent; border-right: 4px solid transparent; border-top: 5px solid #444; flex: none; }

/* title bar */
.titlebar { height: 28px; display: flex; align-items: center; flex: none; white-space: nowrap; }
.qat { width: 293px; flex: none; display: flex; align-items: center; height: 28px; }
.qi { width: 20px; height: 20px; margin-right: 8px; flex: none; }
.qi-app { margin-left: -6px; margin-right: 3px; }
.qsep { width: 1px; height: 14px; background: #8f959b; flex: none; }
.qi-first { margin-left: 8px; }
.qdd { width: 9px; height: 9px; margin: 2px 0 0 1px; flex: none; border-top: 1px solid #111; position: relative; }
.qdd::after { content: ""; position: absolute; left: 0; top: 3px; border-left: 4.500px solid transparent; border-right: 4.500px solid transparent; border-top: 5px solid #111; }
.qleft { width: 0; height: 0; margin-left: 9px; border-top: 6px solid transparent; border-bottom: 6px solid transparent; border-right: 7px solid #2a8fd0; flex: none; }
.menu { display: flex; gap: 18.200px; font-size: 14.500px; color: #1c1c1c; flex: none; }
.apptitle { margin-left: 224px; color: #a3a3a3; font-size: 14.500px; flex: none; }

/* tabs */
.tabs { height: 28px; display: flex; align-items: flex-end; flex: none; font-size: 14.500px; color: #3d3d3d; white-space: nowrap; }
.filebtn { width: 77px; height: 26px; background: #2a5fb4; color: #eef4ff; text-align: center; line-height: 24px; margin-right: 4px; border: 1px solid #1f4f9c; border-left: 0; }
.tab { width: 54px; height: 27px; text-align: center; line-height: 27px; flex: none; }
.tab:nth-child(5), .tab:nth-child(10), .tab:nth-child(14) { width: 84px; }
.tab:nth-child(11) { width: 56px; }
.tab-s { width: 42px; }
.tab-s:nth-child(12) { width: 48px; }
.tab-s:nth-child(17) { width: 52px; }
.tab.on { width: 52px; height: 28px; background: #fff; border: 1px solid #c4c9cf; border-bottom: 0; margin-right: 1px; line-height: 26px; }

/* ribbon */
.ribbon { height: 120px; flex: none; display: flex; background: linear-gradient(#fff, #fafbfb); border-top: 1px solid #c4c9cf; border-bottom: 1px solid #c4c9cf; overflow: hidden; }
.group { position: relative; display: flex; flex-direction: column; margin-top: 5px; height: 110px; flex: none; }
.g1 { margin-left: -5px; padding-right: 4px; border-right: 1px solid #ccd0d5; }
.g2 { margin-left: 4px; padding-right: 4px; border-right: 1px solid #ccd0d5; }
.g3 { margin-left: 4px; padding-right: 4px; border-right: 1px solid #ccd0d5; }
.g4 { margin-left: 4px; flex: 1; }
.tools { display: flex; height: 88px; flex: none; }
.tool { min-width: 46px; display: flex; flex-direction: column; align-items: center; flex: none; white-space: nowrap; font-size: 15px; color: #333; line-height: 20px; }
.tool.w38 { min-width: 38px; }
.tool.w42 { min-width: 42px; }
.ri { width: 40px; height: 40px; flex: none; margin: 0 -1px; }
.tool span { margin-top: 3px; padding: 0 7.500px; }
.g4 .tool span { padding: 0 8px; }
.g3 .tool:nth-child(4), .g3 .tool:nth-child(8) { margin-right: 1px; }
.tool .ar { margin-top: 10px; }
.glabel { text-align: center; font-size: 14px; color: #6e7883; line-height: 20px; height: 20px; }
.glabel-pad { padding-right: 26px; }
.launcher { position: absolute; right: 13px; bottom: 5px; width: 9px; height: 9px; border: 1px solid #777; border-width: 1px 0 0 1px; }
.launcher::after { content: ""; position: absolute; right: -1px; bottom: -1px; width: 5px; height: 5px; background: #555; }

/* toolbar */
.toolbar { height: 32px; flex: none; display: flex; align-items: center; padding-top: 3px; }
.toolbar > div { flex: none; display: flex; align-items: center; justify-content: center; height: 25px; }
.ti { width: 20px; height: 20px; }
.b28 { width: 28px; }
.b27 { width: 27px; }
.b24 { width: 24px; }
.dd { width: 14px; }
.ml2 { margin-left: 2px; }
.ml1 { margin-left: 1px; }
.mr4 { margin-right: 4px; }
.sep { width: 1px; height: 22px; background: #c6cacf; margin: 0 4px; flex: none; }
.yb { background: #ffe18c; border: 1px solid #e3a93a; }
.yb-first { width: 25px; border-left: 0; }
.yb-first .ti { width: 24px; height: 24px; }
.yb-shape { width: 26px; margin: 0 2px; }
.sel { background: #fff; border: 1px solid #c8ccd0; justify-content: space-between !important; padding: 0 6px 0 4px; font-size: 15px; color: #111; }
.sel span { line-height: 23px; }
.w120 { width: 120px; }
.w165 { width: 165px; }
.dis { background: #e9ebee; color: #9a9ea2; border-color: #e1e5e9; }
.dis .ar { border-top-color: #aab; }

/* doc bar */
.docbar { height: 29px; flex: none; display: flex; align-items: flex-end; border-bottom: 1px solid #c4c9cf; }
.mgr { width: 322px; height: 28px; display: flex; align-items: center; overflow: hidden; flex: none; color: #333; }
.mgr-title { margin-left: -9px; font-size: 15px; position: relative; top: -1px; }
.mgr-btn { margin-left: 241px; width: 13px; height: 10px; border: 1.500px solid #8f959b; border-radius: 1px; display: flex; align-items: center; justify-content: center; flex: none; }
.mgr-restore { width: 6px; height: 3px; border: 1px solid #8f959b; }
.mgr-x { margin-left: 8px; color: #a8adb2; font-size: 16px; font-weight: 700; line-height: 1; flex: none; }
.doctab { width: 184px; height: 26px; margin-left: 6px; background: #fff; border: 1px solid #c4c9cf; border-bottom: 0; display: flex; align-items: center; padding: 0 0 3px 37px; font-size: 14.300px; color: #222; flex: none; position: relative; top: 1px; white-space: nowrap; }
.doc-x { margin-left: 7px; color: #6a5a3a; font-size: 15px; line-height: 1; }
.docadd { margin-left: 7px; color: #8f959b; font-size: 22px; line-height: 26px; height: 27px; }

/* main */
.main { flex: 1; display: flex; min-height: 0; }
.strip { width: 28px; flex: none; border-right: 1px solid #b9bfc6; overflow: hidden; }
.strip-on { height: 58px; background: #fff; display: flex; align-items: center; }
.strip-i { height: 59px; display: flex; align-items: center; }
.si { width: 30px; height: 30px; margin-left: -9px; flex: none; }
.strip-on .si { margin-left: -7px; }
.panel { width: 294px; flex: none; display: flex; flex-direction: column; background: #e1e5e9; height: 681px; }
.pfilter { height: 33px; flex: none; display: flex; gap: 2px; padding: 1px 1px 2px 0; }
.psel, .pinput, .pfun { background: #fff; height: 30px; }
.psel { width: 131px; display: flex; align-items: center; justify-content: space-between; padding: 0 6px 0 3px; font-size: 15px; color: #111; }
.pinput { width: 130px; }
.pfun { width: 28px; display: flex; align-items: center; justify-content: center; background: #f6f7f8; }
.pfun-i { width: 20px; height: 20px; }
.treewrap { flex: 1; min-height: 0; display: flex; padding-right: 2px; overflow: hidden; }
.tree { width: 273px; overflow: hidden; background: #fff; flex: none; }
.thead { height: 28px; background: linear-gradient(#f1f3f5, #e8ebef); border-bottom: 1px solid #c8ccd1; padding-left: 6px; line-height: 27px; font-size: 14.500px; color: #222; }
.row { height: 23px; display: flex; align-items: center; font-size: 14.500px; background: #fff; white-space: nowrap; color: #1c1c1c; }
.row.alt { background: #f5f5f6; }
.row.off { color: #9b9b9b; }
.l0 { padding-left: 4px; }
.l1 { padding-left: 22px; }
.l2 { padding-left: 57px; }
.chev { width: 8px; height: 8px; border-right: 1.800px solid #444; border-bottom: 1.800px solid #444; transform: rotate(45deg) translate(-2px,-2px); flex: none; margin-right: 6px; margin-left: 1px; }
.l1 .chev { margin-right: 9px; }
.ni { width: 20px; height: 20px; flex: none; }
.l0 .ni { margin: 0 2px 0 3px; }
.l1 .ni { margin-right: 3px; }
.l2 .ni { margin: 0 3px 0 6px; }
.cb { width: 16px; height: 16px; border: 1px solid #222; background: #fff; flex: none; display: flex; align-items: center; justify-content: center; }
.cb svg { width: 14px; height: 14px; }
.vscroll { width: 19px; display: flex; flex-direction: column; flex: none; background: #d6dbe4; }
.vs-btn { height: 21px; display: flex; align-items: center; justify-content: center; flex: none; background: #e4e7ec; }
.vs-down { background: #d6dbe4; }
.tri-up { width: 0; height: 0; border-left: 4.500px solid transparent; border-right: 4.500px solid transparent; border-bottom: 5px solid #555; }
.ar-big { border-left-width: 4.500px; border-right-width: 4.500px; border-top-color: #666; }
.vs-thumb { height: 351px; flex: none; background: #e9ecf1; border: 1px solid #9ca3ac; display: flex; align-items: center; justify-content: center; }
.grip-h { width: 9px; height: 7px; border-top: 1px solid #777; border-bottom: 1px solid #777; position: relative; }
.grip-h::after { content: ""; position: absolute; left: 0; right: 0; top: 2px; height: 1px; background: #777; }
.vs-track { flex: 1; }
.hscroll { height: 19px; flex: none; display: flex; margin-right: 21px; background: #d6dbe4; }
.hs-btn { width: 21px; display: flex; align-items: center; justify-content: center; flex: none; }
.tri-left { width: 0; height: 0; border-top: 4.500px solid transparent; border-bottom: 4.500px solid transparent; border-right: 5px solid #555; }
.tri-right { width: 0; height: 0; border-top: 4.500px solid transparent; border-bottom: 4.500px solid transparent; border-left: 5px solid #555; }
.hs-thumb { width: 217px; flex: none; background: linear-gradient(#e4e7ec, #eef0f4); border: 1px solid #8f959b; display: flex; align-items: center; justify-content: center; }
.grip-v { width: 7px; height: 9px; border-left: 1px solid #777; border-right: 1px solid #777; position: relative; }
.grip-v::after { content: ""; position: absolute; top: 0; bottom: 0; left: 2px; width: 1px; background: #777; }
.hs-track { flex: 1; }
.playback { height: 30px; margin-top: 1px; padding-bottom: 2px; background: #fdfdfd; border-top: 1px solid #c8ccd1; border-bottom: 1px solid #b9bfc6; display: flex; align-items: center; flex: none; }
.pb-tri { width: 0; height: 0; margin-left: 5px; border-left: 5.500px solid transparent; border-right: 5.500px solid transparent; border-top: 9px solid #555; }
.playback strong { margin-left: 7px; font-size: 15px; font-weight: 700; color: #333; }
.pbbar { height: 18px; flex: none; display: flex; gap: 1px; padding: 5px 0 0 15px; overflow: hidden; background: #f2f3f5; }
.pbb { width: 43px; height: 24px; background: #eeeff1; border: 1px solid #d5d8dc; flex: none; }
.pbb.first { background: #fff; border-color: #c4c9cf; }
.pbb svg { width: 30px; height: 20px; margin: 3px 0 0 5px; }
.splitter { width: 5px; flex: none; background: #e1e5e9; border-right: 1px solid #aeb4bc; border-left: 1px solid #c4c9cf; }

/* viewport */
.viewport { flex: 1; position: relative; overflow: hidden; background: #fff; }
.scene { position: absolute; left: 0; top: 0; width: 1224px; height: 681px; }
.ax { font-family: "Liberation Sans", Arial, sans-serif; font-size: 24px; }
.ax-z { fill: #1212ff; }
.ax-y { fill: #22cc22; }
.ax-x { fill: #ff1010; }
.prompt { position: relative; padding: 6px 0 0 20px; font-size: 15.600px; color: #111; line-height: 19px; }
.prompt p { margin: 0; white-space: nowrap; }
.viewbar { position: absolute; left: 435px; top: 1px; height: 27px; display: flex; align-items: center; gap: 8px; }
.vi { width: 20px; height: 20px; flex: none; }
.vm3 { margin-left: 3px; }
.vg { width: 36px; display: flex; align-items: center; justify-content: space-between; flex: none; padding-right: 1px; }
.vm1 { margin-left: 1px; }
.vhl { width: 42px; height: 27px; margin-left: -3px; display: flex; border: 1px solid #e3a93a; flex: none; }
.vhl-a { width: 24px; background: #ffe9a8; border-right: 1px solid #e3a93a; display: flex; align-items: center; justify-content: center; }
.vhl-b { flex: 1; background: #ffdf7e; display: flex; align-items: center; justify-content: center; }
.vm { width: 22px; height: 25px; }
.swatch { height: 18px; flex: none; }
.swatch.black { width: 20px; margin-left: -3px; background: #000; height: 11px; border: 1px solid #bbb; }
.swatch.blue { width: 19px; margin-left: 2px; background: #b7e3f5; border: 1px solid #444; }
.layer { width: 145px; height: 25px; margin-left: -5px; background: #fff; border: 1px solid #c8ccd0; display: flex; align-items: center; padding: 0 8px 0 10px; font-size: 14.500px; color: #111; flex: none; }
.lb { width: 14px; height: 20px; margin-right: 3px; flex: none; }
.layer span { margin-left: 6px; flex: 1; }

/* popup menu */
.popup { position: absolute; left: 856px; top: 30px; width: 182px; height: 142px; background: #fff; border: 1px solid #d0d3d6; box-shadow: 3px 3px 3px rgba(0,0,0,.35); background-image: linear-gradient(#e6e8ea, #e6e8ea); background-size: 1px 100%; background-position: 28px 0; background-repeat: no-repeat; }
.pi { height: 28px; display: flex; align-items: center; padding-left: 4px; font-size: 15px; color: #5a5a5a; white-space: nowrap; }
.pi svg { width: 22px; height: 26px; flex: none; }
.pi span { margin: -2px 0 0 10px; }
.callout { position: absolute; left: 840px; top: 54px; width: 114px; height: 38px; border: 3px solid #ff7f00; }
```
